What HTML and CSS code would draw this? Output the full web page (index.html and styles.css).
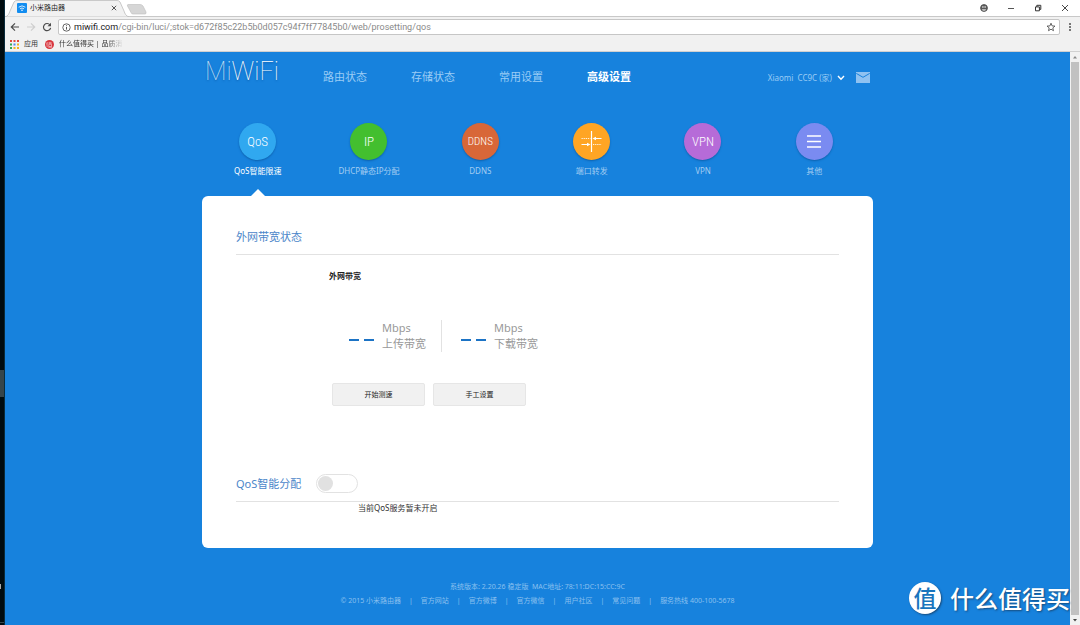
FILE: index.html
```
<!DOCTYPE html>
<html lang="zh-CN">
<head>
<meta charset="utf-8">
<title>小米路由器</title>
<link rel="stylesheet" href="styles.css">
</head>
<body>
<div class="desktop">
  <div class="desk-edge"><span class="edge-task"></span><span class="edge-dot"></span><span class="edge-line"></span></div>
  <div class="browser">
    <div class="tab-strip">
      <svg class="tab-shape" viewBox="0 0 144 17" aria-hidden="true">
        <path d="M0 17 C3 16 4 14 5 11 L9 2 Q10 .5 12 .5 H112 Q114 .5 115 2 L119 11 C120 14 121 16 124 17Z" fill="#f1f1f1" stroke="#bdbdbd" stroke-width=".8"/>
        <path d="M123 4.500 H135 Q137 4.500 138 6 L141 12 Q141.500 14 140 14 H128 Q126.500 14 126 12.500 L122.500 6 Q122 4.500 123 4.500Z" fill="#d6d6d6" stroke="#bcbcbc" stroke-width=".6"/>
      </svg>
      <div class="tab">
        <svg class="favicon" viewBox="0 0 10 10" aria-hidden="true"><rect width="10" height="10" rx="1" fill="#128df0"/><path d="M1.700 4.200Q5 1.500 8.300 4.200M3 5.800Q5 4.200 7 5.800" fill="none" stroke="#fff" stroke-width=".8"/><circle cx="5" cy="7.300" r=".8" fill="#fff"/></svg>
        <span class="tab-title">小米路由器</span>
        <button class="icon-btn" aria-label="关闭标签页"><svg width="6" height="6" viewBox="0 0 6 6"><path d="M.8 .8 5.200 5.200M5.200 .8 .8 5.200" stroke="#555" stroke-width="1"/></svg></button>
      </div>
      <div class="window-controls">
        <button class="icon-btn" aria-label="用户"><svg width="8" height="8" viewBox="0 0 8 8"><circle cx="4" cy="4" r="3.400" fill="#5a5a5a" stroke="#5a5a5a"/><circle cx="2.900" cy="3" r=".8" fill="#fff"/><circle cx="5.100" cy="3" r=".8" fill="#fff"/><path d="M1.800 5.200H6.200Q5.500 6.800 4 6.800T1.800 5.200Z" fill="#ddd"/></svg></button>
        <button class="icon-btn" aria-label="最小化"><svg width="8" height="8" viewBox="0 0 8 8"><path d="M1 4.500H7" stroke="#555"/></svg></button>
        <button class="icon-btn" aria-label="还原"><svg width="8" height="8" viewBox="0 0 8 8"><path d="M1.500 2.900H5.400V6.800H1.500ZM2.800 2.900V1.300H6.800V5.400H5.400" fill="none" stroke="#333"/></svg></button>
        <button class="icon-btn" aria-label="关闭"><svg width="8" height="8" viewBox="0 0 8 8"><path d="M1 1 7 7M7 1 1 7" stroke="#333" stroke-width=".9"/></svg></button>
      </div>
    </div>
    <div class="toolbar">
      <button class="icon-btn" aria-label="后退"><svg width="10" height="10" viewBox="0 0 10 10"><path d="M9 5H1.500M5 1.300 1.300 5 5 8.700" fill="none" stroke="#4d4d4d" stroke-width="1.200"/></svg></button>
      <button class="icon-btn" aria-label="前进"><svg width="10" height="10" viewBox="0 0 10 10"><path d="M1 5H8.500M5 1.300 8.700 5 5 8.700" fill="none" stroke="#cfcfcf" stroke-width="1.200"/></svg></button>
      <button class="icon-btn" aria-label="刷新"><svg width="10" height="10" viewBox="0 0 10 10"><path d="M8 3A3.600 3.600 0 1 0 8.600 5.800" fill="none" stroke="#4d4d4d" stroke-width="1.200"/><path d="M9 .8V4.300H5.500Z" fill="#4d4d4d"/></svg></button>
      <div class="address">
        <svg width="9" height="9" viewBox="0 0 9 9" aria-hidden="true"><circle cx="4.500" cy="4.500" r="3.700" fill="none" stroke="#555" stroke-width=".9"/><path d="M4.500 4V6.600M4.500 2.300V3.200" stroke="#555"/></svg>
        <div class="url"><b>miwifi.com</b>/cgi-bin/luci/;stok=d672f85c22b5b0d057c94f7ff77845b0/web/prosetting/qos</div>
        <button class="icon-btn" aria-label="收藏"><svg width="10" height="10" viewBox="0 0 10 10"><path d="M5 1.200 6.100 3.900 9 4.100 6.800 5.900 7.500 8.700 5 7.200 2.500 8.700 3.200 5.900 1 4.100 3.900 3.900Z" fill="none" stroke="#555" stroke-width=".9"/></svg></button>
      </div>
      <button class="icon-btn" aria-label="菜单"><svg width="6" height="10" viewBox="0 0 6 10"><path d="M2 1H4V3H2ZM2 4H4V6H2ZM2 7H4V9H2Z" fill="#777"/></svg></button>
    </div>
    <div class="bookmarks">
      <a href="#" class="bookmark"><svg width="9" height="9" viewBox="0 0 9 9" aria-hidden="true"><path d="M0 0h2v2h-2zM3.500 0h2v2h-2zM7 0h2v2h-2z" fill="#e0483c"/><path d="M0 3.500h2v2h-2z" fill="#35a853"/><path d="M3.500 3.500h2v2h-2z" fill="#4a84ee"/><path d="M7 3.500h2v2h-2zM3.500 7h2v2h-2zM7 7h2v2h-2z" fill="#f2b31b"/><path d="M0 7h2v2h-2z" fill="#35a853"/></svg><span>应用</span></a>
      <a href="#" class="bookmark"><svg width="9" height="9" viewBox="0 0 9 9" aria-hidden="true"><circle cx="4.500" cy="4.500" r="4.500" fill="#d8343c"/><path d="M2.300 2 1.700 4.300M2.100 3.500V7M3.300 3H7M5 1.800V4M3.800 4.300H6.500V6.600H3.800ZM3.300 7.200H7.200" fill="none" stroke="#fff" stroke-width=".5"/></svg><span class="fade">什么值得买 | 品质消</span></a>
    </div>
    <div class="viewport">
      <div class="page">
        <div class="container">
          <header class="header">
            <a href="#" class="logo"><span>Mi</span>WiFi</a>
            <nav class="nav">
              <a href="#">路由状态</a><a href="#">存储状态</a><a href="#">常用设置</a><a href="#" class="active">高级设置</a>
            </nav>
            <div class="account">
              <button class="router">Xiaomi&nbsp; CC9C (家)<svg width="8" height="6" viewBox="0 0 8 6" aria-hidden="true"><path d="M1 1 4 4.200 7 1" fill="none" stroke="#fff" stroke-width="1.400"/></svg></button>
              <button class="icon-btn" aria-label="消息"><svg width="14" height="11" viewBox="0 0 14 11"><path d="M0 0H14V11H0Z" fill="#8fc2f1"/><path d="M.3 1.400 7 5.300 13.700 1.400" fill="none" stroke="#1782dd" stroke-width="1"/></svg></button>
            </div>
          </header>
          <nav class="features">
            <a href="#" class="feature current"><span class="disc qos">QoS</span><span>QoS智能限速</span></a>
            <a href="#" class="feature"><span class="disc ip">IP</span><span>DHCP静态IP分配</span></a>
            <a href="#" class="feature"><span class="disc ddns">DDNS</span><span>DDNS</span></a>
            <a href="#" class="feature"><span class="disc port"><svg width="21" height="21" viewBox="0 0 21 21" aria-hidden="true"><path d="M10.500 0V21" stroke="#fff" stroke-width="1.200"/><path d="M.5 7.500H9.500M12 13.500H20.500" stroke="#fff" stroke-opacity=".85" stroke-dasharray="1.300 .8"/><path d="M14 7.500H20.500M.5 13.500H7" stroke="#fff"/><path d="M11.500 7.500 15 5.700V9.300ZM9.500 13.500 6 11.700V15.300Z" fill="#fff"/></svg></span><span>端口转发</span></a>
            <a href="#" class="feature"><span class="disc vpn">VPN</span><span>VPN</span></a>
            <a href="#" class="feature"><span class="disc other"><svg width="14" height="13" viewBox="0 0 14 13" aria-hidden="true"><path d="M0 1H14M0 6.500H14M0 12H14" stroke="#fff" stroke-width="1.300"/></svg></span><span>其他</span></a>
          </nav>
          <main class="card">
            <section class="bandwidth">
              <h2>外网带宽状态</h2>
              <div class="bandwidth-body">
                <h3>外网带宽</h3>
                <div class="speeds">
                  <div class="speed"><span class="dashes"><i></i><i></i></span><p>Mbps<br>上传带宽</p></div>
                  <div class="speed"><span class="dashes"><i></i><i></i></span><p>Mbps<br>下载带宽</p></div>
                </div>
                <div class="actions"><button>开始测速</button><button>手工设置</button></div>
              </div>
            </section>
            <section>
              <div class="qos-head">
                <h2><label for="qos-switch">QoS智能分配</label></h2>
                <input type="checkbox" id="qos-switch" class="switch">
              </div>
              <p class="qos-note">当前QoS服务暂未开启</p>
            </section>
          </main>
          <footer class="footer">
            <p>系统版本: 2.20.26 稳定版&nbsp; MAC地址: 78:11:DC:15:CC:9C</p>
            <p class="links"><span>© 2015 小米路由器</span><i>|</i><a href="#">官方网站</a><i>|</i><a href="#">官方微博</a><i>|</i><a href="#">官方微信</a><i>|</i><a href="#">用户社区</a><i>|</i><a href="#">常见问题</a><i>|</i><span>服务热线 400-100-5678</span></p>
          </footer>
        </div>
      </div>
      <div class="scrollbar"><svg width="8" height="10" viewBox="0 0 8 10" aria-hidden="true"><path d="M2 6.500 4 4 6 6.500Z" fill="#888"/></svg><span class="thumb"></span><svg width="8" height="10" viewBox="0 0 8 10" aria-hidden="true"><path d="M2 4 4 6.500 6 4Z" fill="#444"/></svg></div>
    </div>
  </div>
  <div class="watermark"><span class="seal">值</span><span>什么值得买</span></div>
</div>
</body>
</html>
```
FILE: styles.css
```
* { box-sizing: border-box; }
html, body { height: 100%; }
body, h2, h3, p { margin: 0; }
body {
  font-family: "Noto Sans", "Noto Sans CJK SC", sans-serif;
  font-size: 8px;
  line-height: 12px;
  color: #333;
}
a { color: inherit; text-decoration: none; }
i { font-style: normal; }
svg { display: block; flex: none; }
button { font: inherit; color: inherit; border: 0; background: none; padding: 0; }

.desktop { position: relative; min-height: 100vh; display: flex; overflow: hidden; }
.desk-edge { width: 5px; flex: none; background: #000c10; display: flex; flex-direction: column; border-right: 1px solid #0a2c3c; }
.edge-task { height: 27px; margin-top: 370px; background: #36454a; }
.edge-dot { width: 1px; height: 5px; margin-top: 187px; background: #aaa; }
.edge-line { height: 1px; margin-top: auto; margin-bottom: 2px; background: #36454a; }
.browser { flex: 1; min-width: 0; display: flex; flex-direction: column; }

.icon-btn { display: flex; align-items: center; justify-content: center; flex: none; }
.tab-strip { position: relative; height: 17px; display: flex; justify-content: space-between; background: #fff; border-bottom: 1px solid #c8c8c8; }
.tab-shape { position: absolute; left: 0; top: 0; width: 144px; height: 17px; }
.tab { position: relative; width: 112px; padding-left: 12px; display: flex; align-items: center; gap: 3px; }
.favicon { width: 10px; height: 10px; }
.tab-title { flex: 1; font-size: 7px; color: #222; }
.window-controls { display: flex; align-items: center; gap: 19px; padding: 0 11px; }

.toolbar { height: 20px; padding: 0 7px 0 5px; display: flex; align-items: center; gap: 6px; background: #f1f1f1; }
.address { flex: 1; min-width: 0; height: 16px; margin-right: 1px; padding: 0 3px; display: flex; align-items: center; gap: 3px; background: #fff; border: 1px solid #c6c6c6; border-radius: 2px; }
.url { flex: 1; min-width: 0; overflow: hidden; white-space: nowrap; font-family: Roboto, sans-serif; font-size: 9px; color: #8a8a8a; }
.url b { font-weight: 400; color: #222; }
.bookmarks { height: 15px; padding: 0 5px; display: flex; align-items: center; gap: 7px; background: #f1f1f1; border-bottom: 1px solid #d0d0d0; }
.bookmark { display: flex; align-items: center; gap: 5px; font-size: 7px; white-space: nowrap; }
.fade { -webkit-mask-image: linear-gradient(90deg, #000 75%, transparent); mask-image: linear-gradient(90deg, #000 75%, transparent); }

.viewport { flex: 1; display: flex; }
.page { flex: 1; min-width: 0; background: #1782dd; }
.scrollbar { width: 10px; flex: none; padding: 0 1px; display: flex; flex-direction: column; background: #f1f1f1; }
.thumb { flex: 1; background: #c1c1c1; }

.container { width: 100%; max-width: 671px; margin: 0 auto; }
.header { height: 50px; padding: 0 3px; display: flex; align-items: center; color: #9accf5; }
.logo { width: 118px; padding-bottom: 10px; font: 100 25px/30px Roboto, sans-serif; color: #fff; text-shadow: 0 1px 2px #0c5ba8; }
.logo span { color: #c4e1f9; }
.nav { flex: 1; display: flex; gap: 44px; font-size: 11px; line-height: 16px; }
.nav a { white-space: nowrap; }
.nav .active { color: #fff; font-weight: 700; }
.account { display: flex; align-items: center; gap: 11px; padding-top: 1px; }
.router { display: flex; align-items: center; gap: 5px; white-space: nowrap; }

.features { display: grid; grid-template-columns: repeat(6, 1fr); padding: 21px 3px 0 0; color: #a3cdf2; }
.feature { display: flex; flex-direction: column; align-items: center; gap: 5px; padding-bottom: 19px; position: relative; white-space: nowrap; }
.current { color: #fff; }
.current::after { content: ""; position: absolute; bottom: 0; border: 7px solid transparent; border-top: 0; border-bottom-color: #fff; }
.disc { width: 37px; height: 37px; border-radius: 50%; display: flex; align-items: center; justify-content: center; color: #fff; font: 300 13px/16px "Roboto Condensed", "Open Sans Condensed", "Noto Sans Condensed", Roboto, sans-serif; box-shadow: 0 1px 2px #0d61ad; }
.qos { background: #30a8f0; }
.ip { background: #43bf2f; }
.ddns { background: #d86738; font-size: 11px; }
.port { background: #ffa524; }
.vpn { background: #b66bd8; }
.other { background: #7a8bf1; }

.card { background: #fff; border-radius: 6px; padding: 32px 34px 34px; }
h2 { font-size: 11px; line-height: 18px; font-weight: 400; color: #4b86c9; }
.bandwidth h2 { padding-bottom: 8px; border-bottom: 1px solid #e2e2e2; }
.bandwidth-body { padding: 14px 0 68px 93px; }
h3 { font-size: 8px; line-height: 14px; color: #222; }
.speeds { display: flex; margin: 37px 0 31px 20px; }
.speed { display: flex; align-items: center; gap: 8px; }
.speed + .speed { margin-left: 15px; padding-left: 19px; border-left: 1px solid #e2e2e2; }
.speed p { font-size: 11px; line-height: 16px; color: #999; }
.dashes { display: flex; gap: 5px; padding-top: 7px; }
.dashes i { width: 10px; height: 2px; background: #1c73c5; }
.actions { display: flex; gap: 8px; padding-left: 3px; }
.actions button { width: 93px; height: 23px; font-size: 7px; color: #222; background: #f1f1f1; border: 1px solid #e6e6e6; border-radius: 2px; }
.qos-head { display: flex; align-items: center; gap: 15px; padding-bottom: 8px; border-bottom: 1px solid #e2e2e2; }
.switch { appearance: none; width: 42px; height: 19px; margin: 0; padding: 1px; border: 1px solid #e2e2e2; border-radius: 10px; background: #fff; }
.switch::before { content: ""; display: block; width: 15px; height: 15px; border-radius: 50%; background: #e1e1e1; }
.switch:checked::before { margin-left: auto; background: #1782dd; }
.qos-note { padding-left: 122px; }

.footer { padding-top: 32px; font-size: 7px; line-height: 14px; text-align: center; color: #8bc0ef; }
.links { display: flex; justify-content: center; gap: 8px; white-space: nowrap; }

.watermark { position: absolute; right: 10px; bottom: 11px; display: flex; align-items: center; gap: 9px; font-family: "Noto Sans CJK SC", sans-serif; font-size: 24px; line-height: 32px; font-weight: 500; color: #fff; text-shadow: 1px 1px 2px #174b7b; }
.seal { width: 32px; height: 32px; border-radius: 50%; background: #fff; color: #1975bd; font-size: 23px; line-height: 30px; text-align: center; text-shadow: none; box-shadow: 1px 1px 2px #174b7b; }
```
